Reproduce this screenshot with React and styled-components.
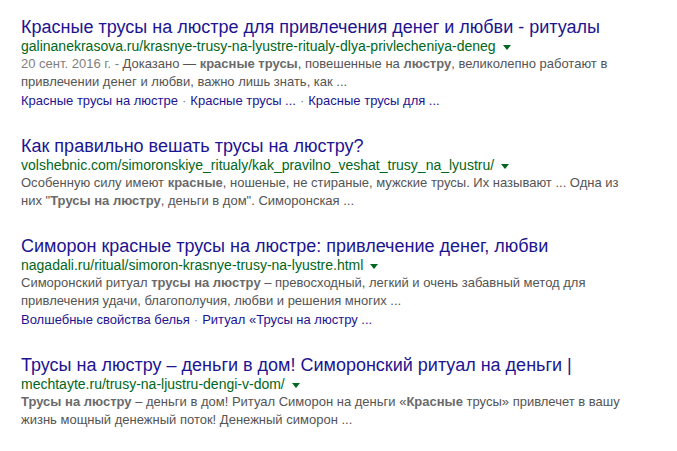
import React from "react";
import styled, { createGlobalStyle } from "styled-components";

const GlobalStyle = createGlobalStyle`
  html, body {
    margin: 0;
    padding: 0;
    background: #ffffff;
  }
  body {
    font-family: "Liberation Sans", Arial, sans-serif;
  }
`;

const Page = styled.div`
  padding: 15px 0 0 21px;
  display: flex;
  flex-direction: column;
  gap: 24px;
`;

const Result = styled.div`
  display: flex;
  flex-direction: column;
`;

const Title = styled.a`
  font-size: 18px;
  line-height: 24px;
  color: #1d1490;
  text-decoration: none;
  white-space: nowrap;
`;

const UrlRow = styled.div`
  display: flex;
  align-items: center;
  height: 16px;
  margin-top: -1px;
  margin-bottom: 1px;
`;

const Cite = styled.cite`
  font-style: normal;
  font-size: 14px;
  line-height: 16px;
  color: #006621;
  white-space: nowrap;
`;

const Arrow = styled.span`
  display: inline-block;
  margin-left: 7px;
  margin-top: 2px;
  width: 0;
  height: 0;
  border-top: 5px solid #006621;
  border-left: 4px solid transparent;
  border-right: 4px solid transparent;
`;

const Snippet = styled.div`
  font-size: 13px;
  line-height: 18px;
  color: #545454;
  white-space: nowrap;

  b {
    color: #6a6a6a;
  }
`;

const Date = styled.span`
  color: #808080;
`;

const Sitelinks = styled.div`
  font-size: 13px;
  line-height: 18px;
  margin-top: 1px;
  color: #545454;
  white-space: nowrap;
`;

const Sitelink = styled.a`
  color: #1d1490;
  text-decoration: none;
`;

const Dot = styled.span`
  color: #808080;
  padding: 0 4px;
`;

const results = [
  {
    title: "Красные трусы на люстре для привлечения денег и любви - ритуалы",
    url: "galinanekrasova.ru/krasnye-trusy-na-lyustre-ritualy-dlya-privlecheniya-deneg",
    snippet: (
      <>
        <Date>20 сент. 2016 г. - </Date>Доказано — <b>красные трусы</b>,
        повешенные на <b>люстру</b>, великолепно работают в
        <br />
        привлечении денег и любви, важно лишь знать, как ...
      </>
    ),
    links: ["Красные трусы на люстре", "Красные трусы ...", "Красные трусы для ..."],
  },
  {
    title: "Как правильно вешать трусы на люстру?",
    url: "volshebnic.com/simoronskiye_ritualy/kak_pravilno_veshat_trusy_na_lyustru/",
    snippet: (
      <>
        Особенную силу имеют <b>красные</b>, ношеные, не стираные, мужские
        трусы. Их называют ... Одна из
        <br />
        них "<b>Трусы на люстру</b>, деньги в дом". Симоронская ...
      </>
    ),
    links: [],
  },
  {
    title: "Симорон красные трусы на люстре: привлечение денег, любви",
    url: "nagadali.ru/ritual/simoron-krasnye-trusy-na-lyustre.html",
    snippet: (
      <>
        Симоронский ритуал <b>трусы на люстру</b> – превосходный, легкий и
        очень забавный метод для
        <br />
        привлечения удачи, благополучия, любви и решения многих ...
      </>
    ),
    links: ["Волшебные свойства белья", "Ритуал «Трусы на люстру ..."],
  },
  {
    title: "Трусы на люстру – деньги в дом! Симоронский ритуал на деньги |",
    url: "mechtayte.ru/trusy-na-ljustru-dengi-v-dom/",
    snippet: (
      <>
        <b>Трусы на люстру</b> – деньги в дом! Ритуал Симорон на деньги «
        <b>Красные</b> трусы» привлечет в вашу
        <br />
        жизнь мощный денежный поток! Денежный симорон ...
      </>
    ),
    links: [],
  },
];

export default function App() {
  return (
    <>
      <GlobalStyle />
      <Page>
        {results.map((r) => (
          <Result key={r.url}>
            <Title href="#">{r.title}</Title>
            <UrlRow>
              <Cite>{r.url}</Cite>
              <Arrow />
            </UrlRow>
            <Snippet>{r.snippet}</Snippet>
            {r.links.length > 0 && (
              <Sitelinks>
                {r.links.map((l, i) => (
                  <React.Fragment key={l}>
                    {i > 0 && <Dot>·</Dot>}
                    <Sitelink href="#">{l}</Sitelink>
                  </React.Fragment>
                ))}
              </Sitelinks>
            )}
          </Result>
        ))}
      </Page>
    </>
  );
}
